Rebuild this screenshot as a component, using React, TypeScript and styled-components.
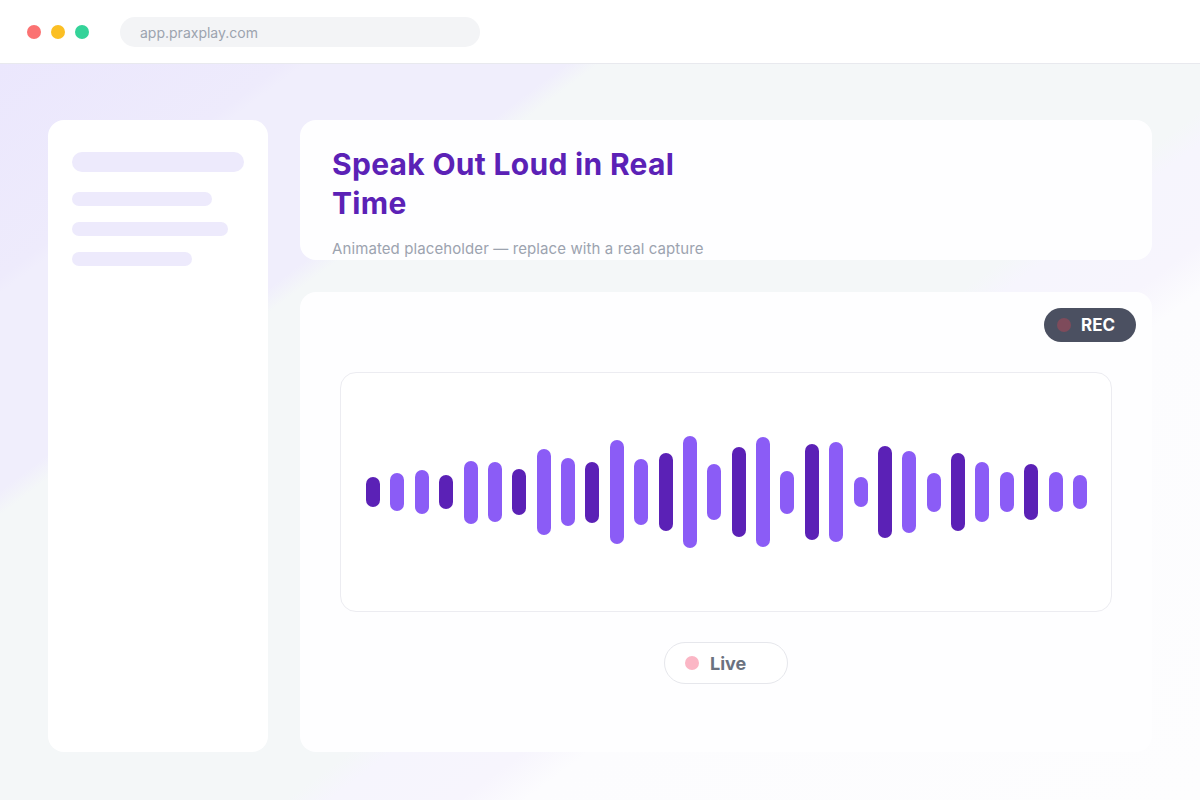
import React from "react";
import styled, { createGlobalStyle } from "styled-components";

const GlobalStyle = createGlobalStyle`
  html, body {
    margin: 0;
    padding: 0;
  }
  body {
    font-family: Inter, "Noto Sans", "Liberation Sans", sans-serif;
    background: #ffffff;
  }
  * {
    box-sizing: border-box;
  }
`;

// [height, dark]
const bars: [number, boolean][] = [
  [30, true], [38, false], [44, false], [34, true], [63, false],
  [60, false], [46, true], [86, false], [68, false], [61, true],
  [104, false], [66, false], [78, true], [112, false], [56, false],
  [90, true], [110, false], [43, false], [96, true], [100, false],
  [30, false], [92, true], [82, false], [39, false], [78, true],
  [60, false], [40, false], [56, true], [40, false], [34, false],
];

const App = () => {
  return (
    <>
      <GlobalStyle />
      <Page>
        <TopBar>
          <Dots>
            <Dot color="#fb7272" />
            <Dot color="#fbbf24" />
            <Dot color="#34d399" />
          </Dots>
          <UrlBar>app.praxplay.com</UrlBar>
        </TopBar>
        <Stage>
          <Sidebar>
            <Skeleton w={172} h={20} />
            <SkeletonList>
              <Skeleton w={140} h={14} />
              <Skeleton w={156} h={14} />
              <Skeleton w={120} h={14} />
            </SkeletonList>
          </Sidebar>
          <Main>
            <HeaderCard>
              <Title>Speak Out Loud in Real Time</Title>
              <Subtitle>Animated placeholder — replace with a real capture</Subtitle>
            </HeaderCard>
            <CaptureCard>
              <RecBadge>
                <RecDot />
                REC
              </RecBadge>
              <WaveBox>
                {bars.map(([h, dark], i) => (
                  <Bar key={i} $dark={dark} style={{ height: h }} />
                ))}
              </WaveBox>
              <LiveRow>
                <LivePill>
                  <LiveDot />
                  Live
                </LivePill>
              </LiveRow>
            </CaptureCard>
          </Main>
        </Stage>
      </Page>
    </>
  );
};

export default App;

const Page = styled.div`
  width: 1200px;
  height: 800px;
  display: flex;
  flex-direction: column;
  overflow: hidden;
`;

const TopBar = styled.div`
  height: 64px;
  flex-shrink: 0;
  background: #ffffff;
  border-bottom: 1px solid #e8e9ee;
  display: flex;
  align-items: center;
  padding: 0 0 0 27px;
`;

const Dots = styled.div`
  display: flex;
  gap: 10px;
  margin-right: 31px;
`;

const Dot = styled.span<{ color: string }>`
  width: 14px;
  height: 14px;
  border-radius: 50%;
  background: ${(p) => p.color};
`;

const UrlBar = styled.div`
  width: 360px;
  height: 30px;
  border-radius: 15px;
  background: #f3f4f6;
  color: #9ca3af;
  font-size: 14px;
  display: flex;
  align-items: center;
  padding: 1px 0 0 20px;
`;

const Stage = styled.div`
  flex: 1;
  display: flex;
  gap: 32px;
  padding: 56px 48px 48px;
  background: linear-gradient(
    143deg,
    #ebe7fd 0%,
    #eeebfc 13%,
    #f0eefc 14%,
    #f0eefc 26%,
    #f4f7f8 27.5%,
    #f4f7f8 58%,
    #f6f5fd 60%,
    #f7f5fd 66%,
    #fcfcfe 69%,
    #fdfdfe 100%
  );
`;

const Sidebar = styled.div`
  width: 220px;
  flex-shrink: 0;
  background: #ffffff;
  border-radius: 16px;
  padding: 32px 24px;
`;

const SkeletonList = styled.div`
  display: flex;
  flex-direction: column;
  gap: 16px;
  margin-top: 20px;
`;

const Skeleton = styled.div<{ w: number; h: number }>`
  width: ${(p) => p.w}px;
  height: ${(p) => p.h}px;
  border-radius: ${(p) => p.h / 2}px;
  background: #edeafc;
`;

const Main = styled.div`
  flex: 1;
  display: flex;
  flex-direction: column;
  gap: 32px;
`;

const HeaderCard = styled.div`
  height: 140px;
  background: #fefeff;
  border-radius: 16px;
  padding: 25px 32px 0;
  overflow: hidden;
`;

const Title = styled.h1`
  margin: 0;
  max-width: 390px;
  font-size: 30px;
  line-height: 39px;
  font-weight: 700;
  letter-spacing: 0.01em;
  color: #5b21b6;
`;

const Subtitle = styled.p`
  margin: 15px 0 0;
  font-size: 15px;
  line-height: 22px;
  letter-spacing: 0.1px;
  color: #9ca3af;
`;

const CaptureCard = styled.div`
  position: relative;
  flex: 1;
  background: #fefeff;
  border-radius: 16px;
  padding: 80px 40px 0;
`;

const RecBadge = styled.div`
  position: absolute;
  top: 16px;
  right: 16px;
  width: 92px;
  height: 34px;
  border-radius: 17px;
  background: #4b5061;
  color: #ffffff;
  font-size: 17px;
  font-weight: 700;
  display: flex;
  align-items: center;
  gap: 10px;
  padding-left: 13px;
`;

const RecDot = styled.span`
  width: 14px;
  height: 14px;
  border-radius: 50%;
  background: #7e4b5b;
`;

const WaveBox = styled.div`
  height: 240px;
  border: 1px solid #ececf1;
  border-radius: 16px;
  background: #ffffff;
  display: flex;
  align-items: center;
  justify-content: space-between;
  padding: 0 24px 0 25px;
`;

const Bar = styled.span<{ $dark: boolean }>`
  width: 14px;
  border-radius: 7px;
  background: ${(p) => (p.$dark ? "#5b21b6" : "#8b5cf6")};
`;

const LiveRow = styled.div`
  display: flex;
  justify-content: center;
  margin-top: 30px;
`;

const LivePill = styled.div`
  width: 124px;
  height: 42px;
  border-radius: 21px;
  border: 1px solid #e6e7ec;
  background: #ffffff;
  color: #6b7280;
  font-size: 18px;
  font-weight: 700;
  display: flex;
  align-items: center;
  gap: 11px;
  padding-left: 20px;
`;

const LiveDot = styled.span`
  width: 14px;
  height: 14px;
  border-radius: 50%;
  background: #fbb6c5;
`;
